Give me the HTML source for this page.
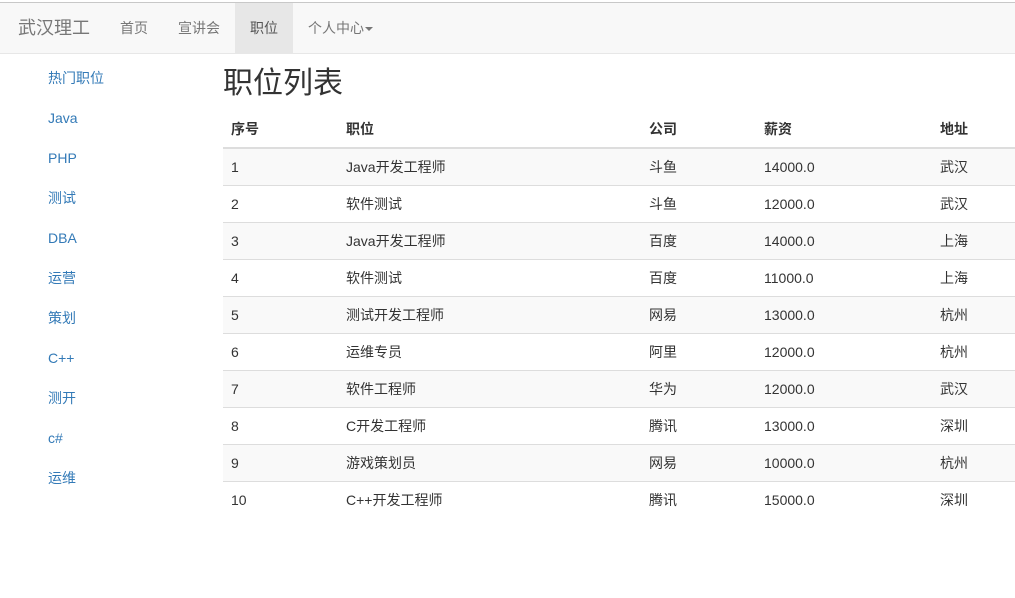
<!DOCTYPE html>
<html><head><meta charset="utf-8"><style>
*{box-sizing:border-box;margin:0;padding:0}
body{width:1015px;height:598px;background:#fff;font-family:"Liberation Sans","Noto Sans CJK SC",sans-serif;font-size:14px;color:#333;position:relative;overflow:hidden}
.top{position:absolute;top:2px;left:0;right:0;height:1px;background:#c8c8c8}
.nav{position:absolute;top:3px;left:0;right:0;height:51px;background:#f8f8f8;border-bottom:1px solid #e7e7e7}
.nav span{position:absolute;top:0;height:50px;line-height:50px;color:#777}
.brand{left:18px;font-size:18px}
.act{background:#e7e7e7;color:#555!important;width:58px;text-align:center}
.caret{display:inline-block;width:0;height:0;border-top:4px solid #777;border-left:4px solid transparent;border-right:4px solid transparent;vertical-align:middle;margin-left:1px}
.side a{position:absolute;left:48px;color:#337ab7;text-decoration:none;line-height:20px}
h1{position:absolute;left:223px;top:64px;font-size:30px;font-weight:normal;line-height:40px}
table{position:absolute;left:223px;top:111px;width:792px;border-collapse:collapse}
td,th{text-align:left;padding:0 8px;height:37px;border-top:1px solid #ddd}
th{border-top:0;border-bottom:2px solid #ddd;height:37px}
tbody tr:nth-child(odd){background:#f9f9f9}
</style></head><body>
<div class="top"></div>
<div class="nav">
<span class="brand">武汉理工</span>
<span style="left:120px">首页</span>
<span style="left:178px">宣讲会</span>
<span class="act" style="left:235px">职位</span>
<span style="left:308px">个人中心<i class="caret"></i></span>
</div>
<div class="side">
<a style="top:68px">热门职位</a><a style="top:108px">Java</a><a style="top:148px">PHP</a><a style="top:188px">测试</a><a style="top:228px">DBA</a><a style="top:268px">运营</a><a style="top:308px">策划</a><a style="top:348px">C++</a><a style="top:388px">测开</a><a style="top:428px">c#</a><a style="top:468px">运维</a>
</div>
<h1>职位列表</h1>
<table>
<colgroup><col style="width:115px"><col style="width:303px"><col style="width:115px"><col style="width:176px"><col></colgroup>
<thead><tr><th>序号</th><th>职位</th><th>公司</th><th>薪资</th><th>地址</th></tr></thead>
<tbody>
<tr><td>1</td><td>Java开发工程师</td><td>斗鱼</td><td>14000.0</td><td>武汉</td></tr>
<tr><td>2</td><td>软件测试</td><td>斗鱼</td><td>12000.0</td><td>武汉</td></tr>
<tr><td>3</td><td>Java开发工程师</td><td>百度</td><td>14000.0</td><td>上海</td></tr>
<tr><td>4</td><td>软件测试</td><td>百度</td><td>11000.0</td><td>上海</td></tr>
<tr><td>5</td><td>测试开发工程师</td><td>网易</td><td>13000.0</td><td>杭州</td></tr>
<tr><td>6</td><td>运维专员</td><td>阿里</td><td>12000.0</td><td>杭州</td></tr>
<tr><td>7</td><td>软件工程师</td><td>华为</td><td>12000.0</td><td>武汉</td></tr>
<tr><td>8</td><td>C开发工程师</td><td>腾讯</td><td>13000.0</td><td>深圳</td></tr>
<tr><td>9</td><td>游戏策划员</td><td>网易</td><td>10000.0</td><td>杭州</td></tr>
<tr><td>10</td><td>C++开发工程师</td><td>腾讯</td><td>15000.0</td><td>深圳</td></tr>
</tbody></table>
</body></html>
